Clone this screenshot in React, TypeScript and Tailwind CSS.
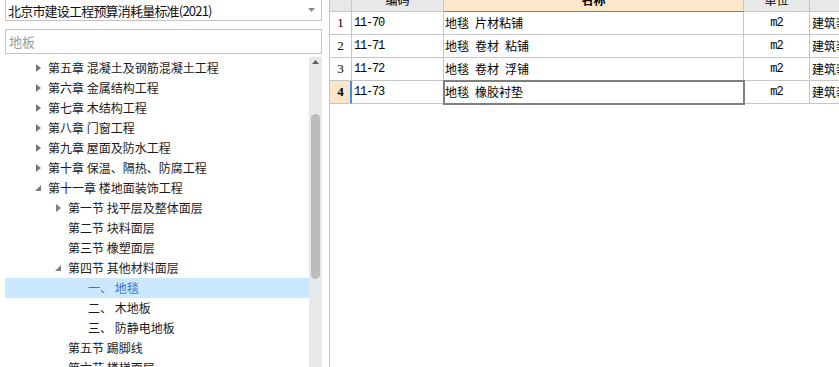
import React from 'react'

type Node = {
  depth: number
  arrow?: 'right' | 'down'
  text: string
  selected?: boolean
}

const tree: Node[] = [
  { depth: 1, arrow: 'right', text: '第五章 混凝土及钢筋混凝土工程' },
  { depth: 1, arrow: 'right', text: '第六章 金属结构工程' },
  { depth: 1, arrow: 'right', text: '第七章 木结构工程' },
  { depth: 1, arrow: 'right', text: '第八章 门窗工程' },
  { depth: 1, arrow: 'right', text: '第九章 屋面及防水工程' },
  { depth: 1, arrow: 'right', text: '第十章 保温、隔热、防腐工程' },
  { depth: 1, arrow: 'down', text: '第十一章 楼地面装饰工程' },
  { depth: 2, arrow: 'right', text: '第一节 找平层及整体面层' },
  { depth: 2, text: '第二节 块料面层' },
  { depth: 2, text: '第三节 橡塑面层' },
  { depth: 2, arrow: 'down', text: '第四节 其他材料面层' },
  { depth: 3, text: '一、 地毯', selected: true },
  { depth: 3, text: '二、 木地板' },
  { depth: 3, text: '三、 防静电地板' },
  { depth: 2, text: '第五节 踢脚线' },
  { depth: 2, text: '第六节 楼梯面层' },
]

// en spaces (\u2002) to get the wide gaps of the grid font
const rows = [
  { no: 1, code: '11-70', name: '地毯\u2002片材粘铺', unit: 'm2' },
  { no: 2, code: '11-71', name: '地毯\u2002卷材\u2002粘铺', unit: 'm2' },
  { no: 3, code: '11-72', name: '地毯\u2002卷材\u2002浮铺', unit: 'm2' },
  { no: 4, code: '11-73', name: '地毯\u2002橡胶衬垫', unit: 'm2' },
]

const indent: Record<number, string> = {
  1: 'pl-[23px]',
  2: 'pl-[43px]',
  3: 'pl-[63px]',
}

const Arrow = ({ dir }: { dir?: 'right' | 'down' }) => (
  <span className="w-5 h-5 flex items-center justify-center shrink-0">
    {dir === 'right' && (
      <svg width="5" height="8" viewBox="0 0 5 8">
        <path d="M0 0 L5 4 L0 8 Z" fill="#7b7b7b" />
      </svg>
    )}
    {dir === 'down' && (
      <svg width="6" height="6" viewBox="0 0 6 6">
        <path d="M6 0 L6 6 L0 6 Z" fill="#7b7b7b" />
      </svg>
    )}
  </span>
)

const cjk = "font-['Noto_Sans_CJK_SC','Noto_Sans',sans-serif]"

export default function App() {
  return (
    <div className={`w-[839px] h-[367px] overflow-hidden bg-white flex ${cjk}`}>
      {/* left: library tree */}
      <div className="w-[330px] shrink-0 border-r border-[#c6c6c6] flex flex-col">
        <div className="ml-[5px] mr-[7px] -mt-px h-[22px] border border-[#c4c4c4] flex items-center justify-between pl-[2px] pr-[6px]">
          <span className="text-[13px] text-[#111] leading-none tracking-[-0.8px]">
            北京市建设工程预算消耗量标准(2021)
          </span>
          <svg width="7" height="4" viewBox="0 0 7 4">
            <path d="M0 0 L7 0 L3.5 4 Z" fill="#8a8a8a" />
          </svg>
        </div>
        <div className="ml-[5px] mr-[7px] mt-[8px] h-[25px] border border-[#c4c4c4] flex items-center pl-[3px]">
          <span className="text-[13px] text-[#9c9c9c] leading-none">地板</span>
        </div>
        <div className="flex mt-[3px] flex-1 min-h-0">
          <div className="ml-[5px] w-[304px] pt-px flex flex-col">
            {tree.map((n, i) => (
              <div
                key={i}
                className={`h-5 shrink-0 flex items-center text-[12px] whitespace-pre ${indent[n.depth]} ${
                  n.selected ? 'bg-[#cce8ff] text-[#2b79d8]' : 'text-[#1b1b1b]'
                }`}
              >
                <Arrow dir={n.arrow} />
                <span className="leading-none">{n.text}</span>
              </div>
            ))}
          </div>
          <div className="w-[13px] bg-[#e8e8e8] flex flex-col items-center">
            <svg className="mt-[3px]" width="7" height="4" viewBox="0 0 7 4">
              <path d="M3.5 0 L7 4 L0 4 Z" fill="#606060" />
            </svg>
            <div className="mt-[50px] w-[9px] h-[165px] rounded-full bg-[#bcbcbc]" />
          </div>
        </div>
      </div>

      {/* right: quota table */}
      <div className="flex-1 min-w-0 overflow-hidden">
        <div className="grid grid-cols-[22px_92px_300px_66px_80px] -mt-[12px] text-[12px]">
          <div className="h-[24px] bg-[#e8e8e8] border-r border-b border-[#c6c6c6]" />
          <div className="h-[24px] bg-[#e8e8e8] border-r border-b border-[#c6c6c6] flex items-center justify-center">
            编码
          </div>
          <div className="h-[24px] bg-[#fee7ca] border-r border-b border-r-[#c6c6c6] border-b-[#3d8ee6] flex items-center justify-center font-bold">
            名称
          </div>
          <div className="h-[24px] bg-[#e8e8e8] border-r border-b border-[#c6c6c6] flex items-center justify-center">
            单位
          </div>
          <div className="h-[24px] bg-[#e8e8e8] border-b border-[#c6c6c6]" />

          {rows.map((r) => {
            const sel = r.no === 4
            return (
              <React.Fragment key={r.no}>
                <div
                  className={`h-[23px] border-r border-b flex items-center justify-center font-['Liberation_Serif',serif] text-[13px] ${
                    sel
                      ? 'bg-[#fde5c8] font-bold border-r-[#3d8ee6] border-b-[#c6c6c6] shadow-[inset_-1px_0_0_#3d8ee6]'
                      : 'border-[#c6c6c6]'
                  }`}
                >
                  {r.no}
                </div>
                <div className="h-[23px] border-r border-b border-[#c6c6c6] flex items-center pl-[2px] font-['Liberation_Mono',monospace] tracking-[-1.2px] text-[12px]">
                  {r.code}
                </div>
                <div
                  className={`h-[23px] border-r border-b border-[#c6c6c6] flex items-center pl-[1px] whitespace-pre ${
                    sel ? 'relative z-10 outline-2 outline-[#7f7f7f] -outline-offset-1' : ''
                  }`}
                >
                  {r.name}
                </div>
                <div className="h-[23px] border-r border-b border-[#c6c6c6] flex items-center justify-center font-['Liberation_Mono',monospace] tracking-[-1px]">
                  {r.unit}
                </div>
                <div className="h-[23px] border-b border-[#c6c6c6] flex items-center pl-[2px] whitespace-nowrap">
                  建筑装饰工程
                </div>
              </React.Fragment>
            )
          })}
        </div>
      </div>
    </div>
  )
}
